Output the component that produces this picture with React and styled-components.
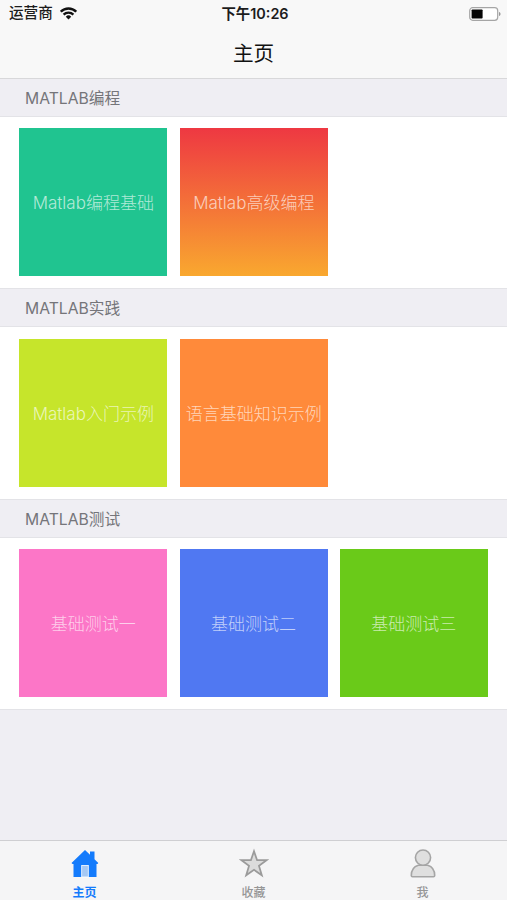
import styled, { createGlobalStyle } from 'styled-components';

const GlobalStyle = createGlobalStyle`
  * {
    box-sizing: border-box;
  }
  body {
    margin: 0;
    background: #efeef3;
    font-family: Inter, "Noto Sans CJK SC", sans-serif;
  }
`;

const Screen = styled.div`
  display: flex;
  flex-direction: column;
  height: 900px;
  overflow: hidden;
  background: #efeef3;
`;

const Top = styled.header`
  height: 78.5px;
  flex-shrink: 0;
  background: #f8f8f8;
  border-bottom: 1px solid #d8d8da;
`;

const StatusBar = styled.div`
  display: grid;
  grid-template-columns: 1fr auto 1fr;
  align-items: center;
  height: 27px;
  padding: 0 6px 0 9px;
  color: #1c1c1c;
  font-size: 14.6px;
`;

const Carrier = styled.div`
  display: flex;
  align-items: center;
  gap: 7px;
  margin: -1px 0;
  font-weight: 500;
  line-height: 29px;
`;

const Time = styled.div`
  font-size: 14.4px;
  font-weight: 600;
  line-height: 27px;
`;

const Battery = styled.div`
  display: flex;
  justify-content: flex-end;
`;

const Title = styled.h1`
  margin: 0;
  color: #111;
  font-size: 20.6px;
  font-weight: 400;
  line-height: 54px;
  text-align: center;
`;

const SectionTitle = styled.h2`
  height: 38px;
  margin: 0;
  padding-left: 25px;
  border-bottom: 1px solid #e3e3e7;
  color: #75757a;
  font-size: 15.7px;
  font-weight: 400;
  line-height: 40px;
`;

const Tiles = styled.div`
  display: flex;
  gap: 12.3px;
  height: 172.5px;
  padding: 11.8px 19.2px 0;
  background: #fff;
  border-bottom: 1px solid #e3e3e7;
`;

const Tile = styled.div`
  display: flex;
  align-items: center;
  justify-content: center;
  width: 148.2px;
  height: 148.2px;
  padding-bottom: 1px;
  background: ${({ $fill }) => $fill};
  color: rgba(255, 255, 255, 0.66);
  font-size: 17px;
  font-weight: 300;
  white-space: nowrap;
`;

const TabBar = styled.nav`
  display: flex;
  height: 60px;
  margin-top: auto;
  background: #f5f5f6;
  border-top: 1px solid #cfcfd2;
`;

const Tab = styled.div`
  flex: 1;
  display: flex;
  flex-direction: column;
  align-items: center;
  padding-top: 7px;
  color: ${({ $active }) => ($active ? '#147bfc' : '#969696')};
  font-size: 12px;
  font-weight: ${({ $active }) => ($active ? 600 : 500)};
  line-height: 18px;

  svg {
    display: block;
    flex-shrink: 0;
    margin-bottom: 6px;
  }
`;

const WifiIcon = () => (
  <svg width="17" height="13" viewBox="0 0 17 13" fill="none" stroke="#111" strokeWidth="2.3">
    <path d="M.8 4.7a10.9 10.9 0 0 1 15.4 0" />
    <path d="M3.6 7.6a6.9 6.9 0 0 1 9.8 0" />
    <path d="M8.5 12.4 5.8 9.7a3.8 3.8 0 0 1 5.4 0z" fill="#111" stroke="none" />
  </svg>
);

const BatteryIcon = () => (
  <svg width="32" height="14" viewBox="0 0 32 14">
    <rect x=".7" y=".7" width="28" height="12.6" rx="3" fill="#fff" stroke="#a5a5a5" strokeWidth="1.2" />
    <rect x="2.6" y="2.5" width="11" height="9" rx=".8" fill="#050505" />
    <path d="M30 5v4c1-.3 1.5-1.1 1.5-2S31 5.3 30 5z" fill="#999" />
  </svg>
);

const HomeIcon = () => (
  <svg width="28" height="30" viewBox="0 0 28 30">
    <path d="M14 2 19 6.800V3.500h4.500v7.700l3.800 3.900-.8.900H25.500V29H2.500V16H1.500L.5 15.100z" fill="#147bfc" />
    <rect x="10.700" y="17.500" width="6.600" height="11.500" fill="#a5c8f4" stroke="#fff" strokeWidth=".8" />
  </svg>
);

const StarIcon = () => (
  <svg width="30" height="30" viewBox="0 0 30 30">
    <path
      d="m15 3.200 3.100 9h9.400l-7.500 5.700 2.800 9.400L15 21.800l-7.800 5.500 2.800-9.400-7.500-5.700h9.400z"
      fill="#dcdcdc"
      stroke="#9b9b9b"
      strokeWidth="1.800"
    />
  </svg>
);

const PersonIcon = () => (
  <svg width="26" height="30" viewBox="0 0 26 30" fill="#dfdfdf" stroke="#a5a5a5" strokeWidth="1.600">
    <path d="M8.300 17.200C4 18.500 1.300 22 1.300 27.500c0 .8.400 1.200 1.200 1.200h21c.8 0 1.200-.4 1.200-1.200 0-5.500-2.700-9-7-10.300z" />
    <circle cx="13" cy="9.600" r="7.600" />
  </svg>
);

const sections = [
  {
    title: 'MATLAB编程',
    tiles: [
      { name: 'Matlab编程基础', fill: '#20c490' },
      { name: 'Matlab高级编程', fill: 'linear-gradient(#ee3842, #f9a82f)' },
    ],
  },
  {
    title: 'MATLAB实践',
    tiles: [
      { name: 'Matlab入门示例', fill: '#c6e52b' },
      { name: '语言基础知识示例', fill: '#ff8a3a' },
    ],
  },
  {
    title: 'MATLAB测试',
    tiles: [
      { name: '基础测试一', fill: '#fc76c7' },
      { name: '基础测试二', fill: '#5078f2' },
      { name: '基础测试三', fill: '#6aca19' },
    ],
  },
];

const App = () => {
  return (
    <Screen>
      <GlobalStyle />
      <Top>
        <StatusBar>
          <Carrier>
            运营商
            <WifiIcon />
          </Carrier>
          <Time>下午10:26</Time>
          <Battery>
            <BatteryIcon />
          </Battery>
        </StatusBar>
        <Title>主页</Title>
      </Top>
      {sections.map((section) => (
        <section key={section.title}>
          <SectionTitle>{section.title}</SectionTitle>
          <Tiles>
            {section.tiles.map((tile) => (
              <Tile key={tile.name} $fill={tile.fill}>
                {tile.name}
              </Tile>
            ))}
          </Tiles>
        </section>
      ))}
      <TabBar>
        <Tab $active>
          <HomeIcon />
          主页
        </Tab>
        <Tab>
          <StarIcon />
          收藏
        </Tab>
        <Tab>
          <PersonIcon />
          我
        </Tab>
      </TabBar>
    </Screen>
  );
};

export default App;
